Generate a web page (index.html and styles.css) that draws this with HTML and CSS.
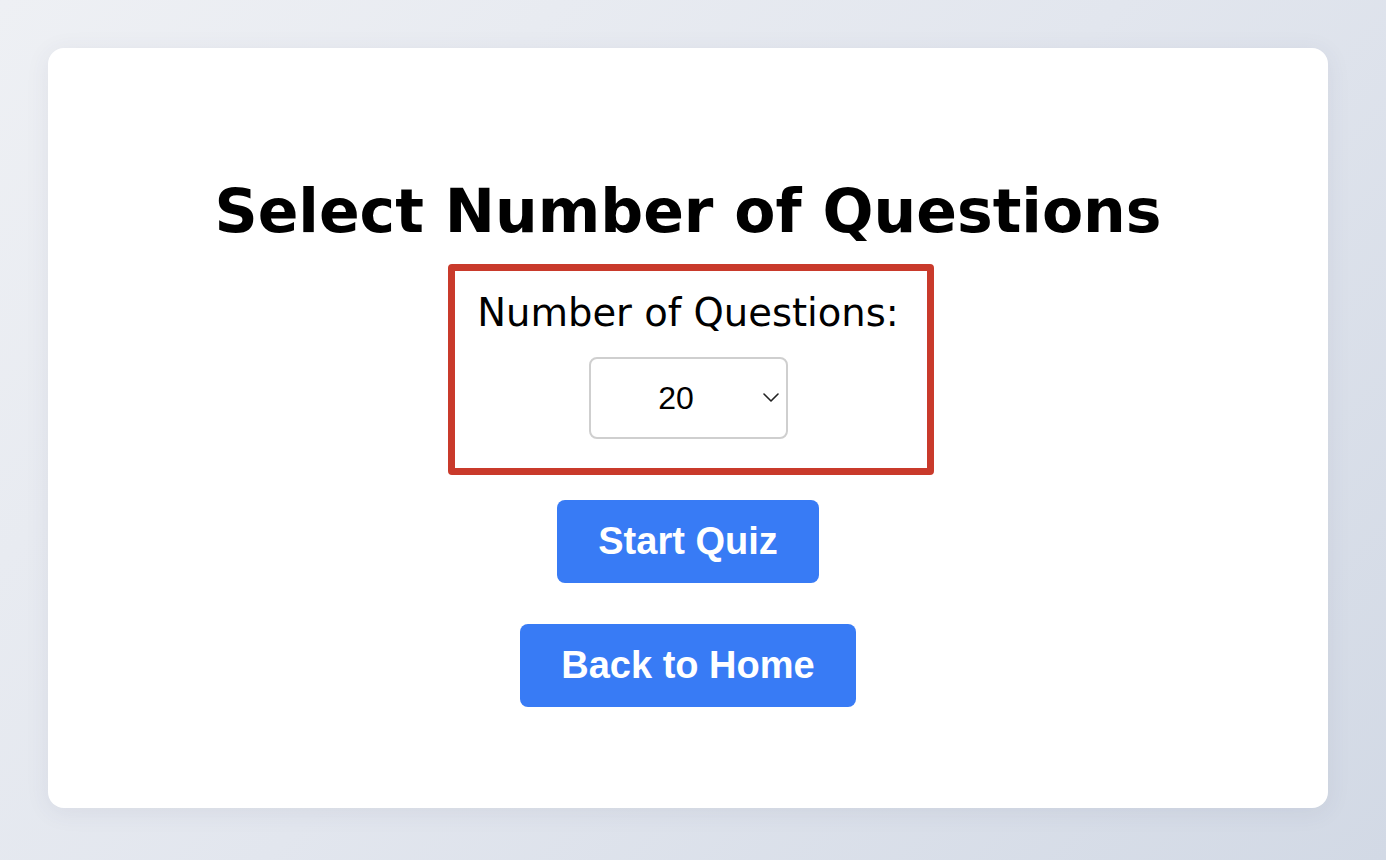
FILE: index.html
```html
<!DOCTYPE html>
<html lang="en">
<head>
<meta charset="utf-8">
<title>Select Number of Questions</title>
<link rel="stylesheet" href="styles.css">
</head>
<body>
  <main class="card">
    <h1 class="title">Select Number of Questions</h1>
    <div class="picker">
      <label class="picker-label" for="count">Number of Questions:</label>
      <div class="select-wrap">
        <select id="count" class="select">
          <option>5</option>
          <option>10</option>
          <option>15</option>
          <option selected>20</option>
          <option>25</option>
        </select>
        <svg class="chevron" width="16" height="9" viewBox="0 0 16 9" aria-hidden="true">
          <path d="M1 1 L8 8 L15 1" fill="none" stroke="#222" stroke-width="1.6" stroke-linecap="round" stroke-linejoin="round"/>
        </svg>
      </div>
    </div>
    <button class="btn btn-start">Start Quiz</button>
    <button class="btn btn-home">Back to Home</button>
  </main>
</body>
</html>
```
FILE: styles.css
```css
html, body {
  margin: 0;
  height: 100%;
}
body {
  background: linear-gradient(135deg, #eef0f4 0%, #e2e6ee 50%, #d2d9e5 100%);
  padding: 48px;
  box-sizing: border-box;
  font-family: "DejaVu Sans", "Liberation Sans", sans-serif;
}
.card {
  background: #ffffff;
  border-radius: 16px;
  width: 1280px;
  height: 760px;
  box-sizing: border-box;
  display: flex;
  flex-direction: column;
  align-items: center;
  justify-content: flex-start;
  box-shadow: 0 4px 24px rgba(60, 70, 100, 0.08);
  padding-top: 127px;
}
.title {
  margin: 0 0 17px;
  font-family: "DejaVu Sans", sans-serif;
  font-weight: 700;
  font-size: 60px;
  line-height: 72px;
  color: #000;
  letter-spacing: 0;
}
.picker {
  border: 7px solid #c93a2b;
  border-radius: 4px;
  padding: 18px 31px 29px 25px;
  margin-left: 6px;
  display: flex;
  flex-direction: column;
  align-items: center;
  width: 486px;
  box-sizing: border-box;
}
.picker-label {
  font-family: "DejaVu Sans", sans-serif;
  font-weight: 400;
  font-size: 38.5px;
  line-height: 48px;
  color: #000;
  margin-bottom: 20px;
  white-space: nowrap;
}
.select-wrap {
  position: relative;
  width: 199px;
  height: 82px;
}
.select {
  appearance: none;
  -webkit-appearance: none;
  width: 100%;
  height: 100%;
  border: 2px solid #cfcfcf;
  border-radius: 8px;
  background: #fff;
  font-family: "Liberation Sans", Arial, sans-serif;
  font-size: 32px;
  color: #000;
  padding: 0 24px 0 0;
  text-align: center;
  text-align-last: center;
}
.chevron {
  position: absolute;
  right: 9px;
  top: 36px;
  pointer-events: none;
}
.btn {
  border: none;
  border-radius: 8px;
  background: #387bf5;
  color: #fff;
  font-family: "Liberation Sans", Arial, sans-serif;
  font-weight: 700;
  font-size: 38px;
  height: 83px;
  padding: 0 41px;
  cursor: pointer;
}
.btn-start {
  margin-top: 25px;
}
.btn-home {
  margin-top: 41px;
}
```
